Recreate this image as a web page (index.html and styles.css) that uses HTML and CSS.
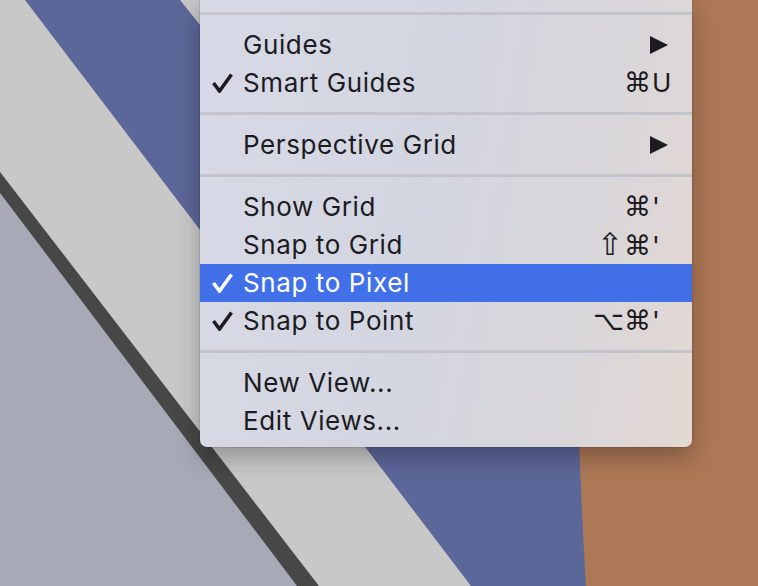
FILE: index.html
```html
<!DOCTYPE html>
<html>
<head>
<meta charset="utf-8">
<link rel="stylesheet" href="styles.css">
</head>
<body>
<div class="desktop">
  <svg class="wall" viewBox="0 0 758 586" width="758" height="586">
    <rect x="0" y="0" width="758" height="586" fill="#c8c8c8"/>
    <polygon points="25,0 758,0 758,586 471,586" fill="#5c6799"/>
    <polygon points="180,0 500,0 500,400" fill="#c6c6c8"/>
    <path d="M578 0 L758 0 L758 586 L586 586 Q582 520 579 440 Z" fill="#ad7856"/>
    <polygon points="0,193 297,586 0,586" fill="#a7aab6"/>
    <polygon points="0,172 319,586 297,586 0,193" fill="#474747"/>
  </svg>

  <div class="menu">
    <div class="sep first"></div>
    <div class="item">
      <span class="check"></span>
      <span class="label">Guides</span>
      <svg class="arrow" viewBox="0 0 18 20" width="18" height="20"><polygon points="0,1 18,10 0,19" fill="#1d1b20"/></svg>
    </div>
    <div class="item">
      <span class="check"><svg viewBox="0 0 22 20" width="22" height="20"><path d="M2.5 10 L8.5 18 L20.5 1.5" fill="none" stroke="#1d1b22" stroke-width="3.6"/></svg></span>
      <span class="label">Smart Guides</span>
      <span class="shortcut"><span class="mods">⌘</span><span class="key">U</span></span>
    </div>
    <div class="sep"></div>
    <div class="item">
      <span class="check"></span>
      <span class="label">Perspective Grid</span>
      <svg class="arrow" viewBox="0 0 18 20" width="18" height="20"><polygon points="0,1 18,10 0,19" fill="#1d1b20"/></svg>
    </div>
    <div class="sep"></div>
    <div class="item">
      <span class="check"></span>
      <span class="label">Show Grid</span>
      <span class="shortcut"><span class="mods">⌘</span><span class="key">'</span></span>
    </div>
    <div class="item">
      <span class="check"></span>
      <span class="label">Snap to Grid</span>
      <span class="shortcut"><span class="mods"><span class="shift">⇧</span>⌘</span><span class="key">'</span></span>
    </div>
    <div class="item active">
      <span class="check"><svg viewBox="0 0 22 20" width="22" height="20"><path d="M2.5 10 L8.5 18 L20.5 1.5" fill="none" stroke="#ffffff" stroke-width="3.6"/></svg></span>
      <span class="label">Snap to Pixel</span>
    </div>
    <div class="item">
      <span class="check"><svg viewBox="0 0 22 20" width="22" height="20"><path d="M2.5 10 L8.5 18 L20.5 1.5" fill="none" stroke="#1d1b22" stroke-width="3.6"/></svg></span>
      <span class="label">Snap to Point</span>
      <span class="shortcut"><span class="mods">⌥⌘</span><span class="key">'</span></span>
    </div>
    <div class="sep"></div>
    <div class="item">
      <span class="check"></span>
      <span class="label">New View...</span>
    </div>
    <div class="item">
      <span class="check"></span>
      <span class="label">Edit Views...</span>
    </div>
  </div>
</div>
</body>
</html>
```

FILE: styles.css
```css
html, body {
  margin: 0;
  padding: 0;
  width: 758px;
  height: 586px;
  overflow: hidden;
}

.desktop {
  position: relative;
  width: 758px;
  height: 586px;
  overflow: hidden;
  font-family: "Inter", "Noto Sans", sans-serif;
}

.wall {
  position: absolute;
  left: 0;
  top: 0;
  display: block;
}

.menu {
  position: absolute;
  left: 200px;
  top: 0;
  width: 492px;
  padding-bottom: 7px;
  border-radius: 0 0 7px 7px;
  background: linear-gradient(100deg, #d7dae6 0%, #d3d6e0 45%, #d8d6da 75%, #e3d8d3 100%);
  box-shadow: 0 0 0 0.5px rgba(0, 0, 0, 0.18), 0 10px 24px rgba(0, 0, 0, 0.28);
  color: #1c1b22;
}

.sep {
  height: 3px;
  background: #c3c4cc;
  margin: 10px 0 11px;
}

.sep.first {
  margin: 12px 0 11px;
}

.item {
  display: flex;
  align-items: center;
  height: 38px;
  padding-right: 18px;
  font-size: 26px;
  letter-spacing: 0.6px;
  line-height: 38px;
}

.item.active {
  background: #4170e8;
  color: #ffffff;
}

.check {
  width: 43px;
  flex: none;
  display: flex;
  align-items: center;
}

.check svg {
  margin-left: 11px;
  display: block;
}

.label {
  flex: 1;
  white-space: nowrap;
}

.arrow {
  margin-right: 6px;
  display: block;
}

.shortcut {
  display: flex;
  align-items: baseline;
  font-family: "DejaVu Sans", sans-serif;
  font-size: 27px;
  letter-spacing: 0;
}

.mods {
  text-align: right;
}

.shift {
  font-size: 31px;
  margin-right: 1px;
}

.key {
  width: 22px;
  margin-left: 1px;
  font-family: "Inter", sans-serif;
  font-size: 26px;
}
```
